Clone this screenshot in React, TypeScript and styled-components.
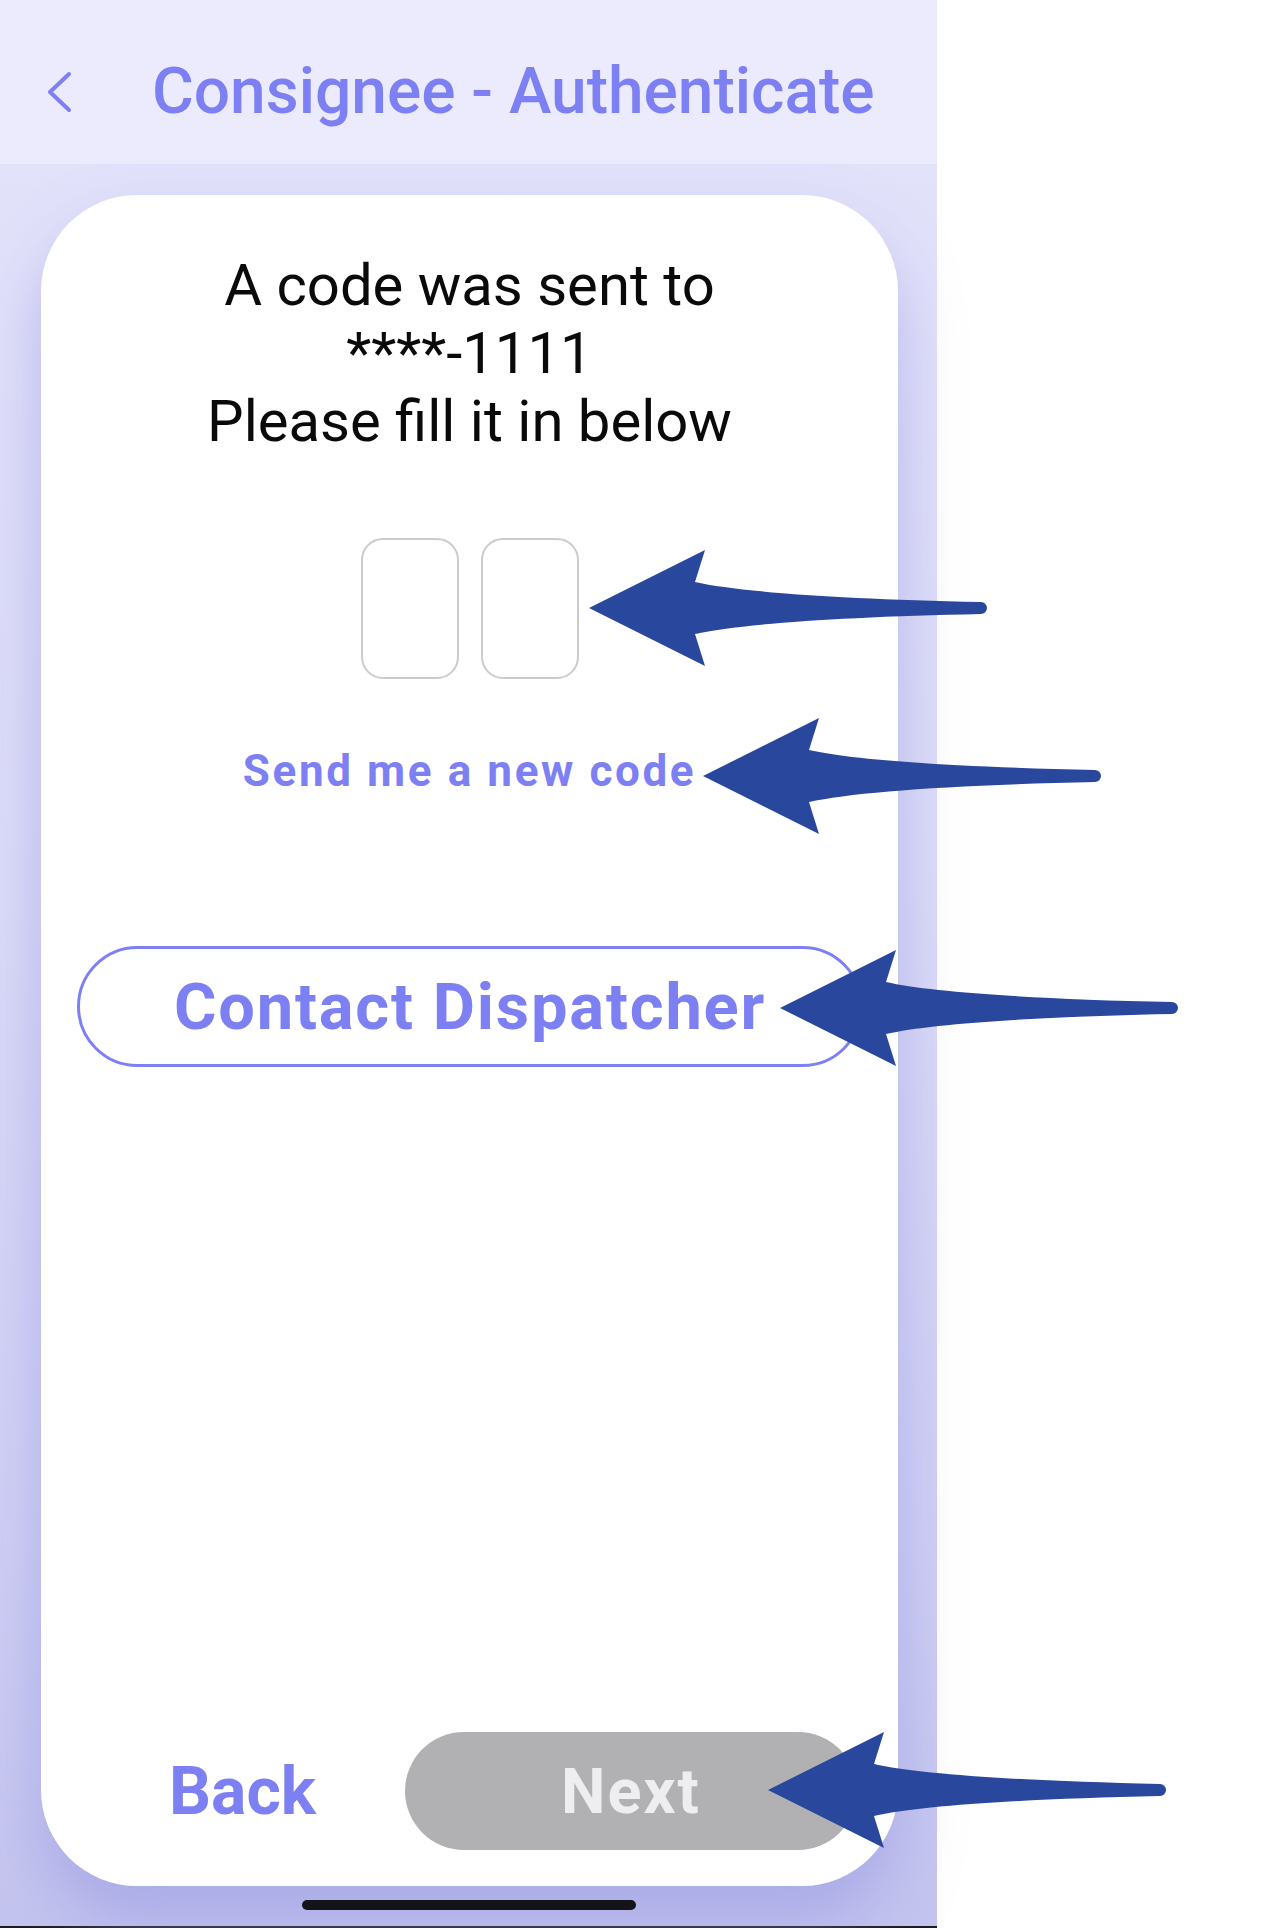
import React from 'react';
import styled, { createGlobalStyle } from 'styled-components';

const GlobalStyle = createGlobalStyle`
    html, body {
        margin: 0;
        padding: 0;
        background: #ffffff;
    }
    body {
        font-family: Roboto, "Liberation Sans", Arial, sans-serif;
    }
    * {
        box-sizing: border-box;
    }
`;

const Page = styled.div`
    position: relative;
    width: 1280px;
    height: 1928px;
    display: flex;
    background: #ffffff;
    overflow: hidden;
`;

const Phone = styled.div`
    width: 937px;
    height: 1928px;
    display: flex;
    flex-direction: column;
    background: linear-gradient(180deg, #e4e3fb 0%, #dcdcf8 45%, #cfcff4 80%, #c4c4ef 100%);
    border-bottom: 2px solid #1c1c24;
`;

const Header = styled.header`
    height: 164px;
    flex-shrink: 0;
    display: flex;
    align-items: center;
    padding: 20px 0 0 47px;
    background: #ecebfd;
`;

const Chevron = styled.svg`
    width: 26px;
    height: 42px;
    flex-shrink: 0;
`;

const Title = styled.h1`
    margin: 0 0 0 79px;
    font-size: 64px;
    line-height: 1;
    font-weight: 500;
    color: #7d80f2;
    white-space: nowrap;
`;

const Card = styled.main`
    flex-shrink: 0;
    height: 1691px;
    margin: 31px 39px 0 41px;
    padding-top: 56px;
    display: flex;
    flex-direction: column;
    align-items: center;
    background: #ffffff;
    border-radius: 96px;
    box-shadow: 0 36px 60px rgba(150, 150, 225, 0.55);
`;

const Message = styled.p`
    margin: 0;
    font-size: 58px;
    line-height: 68px;
    font-weight: 400;
    color: #0a0a0a;
    text-align: center;
`;

const CodeRow = styled.div`
    display: flex;
    gap: 22px;
    margin-top: 83px;
`;

const CodeBox = styled.div`
    width: 98px;
    height: 141px;
    border: 2px solid #cbcbcb;
    border-radius: 22px;
    background: #ffffff;
`;

const ResendLink = styled.a`
    margin-top: 66px;
    font-size: 44px;
    line-height: 52px;
    font-weight: 700;
    letter-spacing: 2.6px;
    color: #7d80f2;
    text-decoration: none;
`;

const OutlineButton = styled.button`
    align-self: stretch;
    margin: 149px 35px 0 36px;
    height: 121px;
    border: 3px solid #7d80f2;
    border-radius: 61px;
    background: transparent;
    font-family: inherit;
    font-size: 65px;
    font-weight: 700;
    letter-spacing: 1.8px;
    color: #7d80f2;
    padding: 0;
`;

const Footer = styled.div`
    margin-top: auto;
    align-self: stretch;
    display: flex;
    align-items: center;
    justify-content: space-between;
    padding: 0 41px 36px 128px;
`;

const TextButton = styled.button`
    border: none;
    background: none;
    padding: 0;
    font-family: inherit;
    font-size: 66px;
    font-weight: 700;
    color: #7d80f2;
`;

const PillButton = styled.button<{ $disabled?: boolean }>`
    width: 452px;
    height: 118px;
    border: none;
    border-radius: 59px;
    background: ${p => (p.$disabled ? '#b1b0b3' : '#7d80f2')};
    font-family: inherit;
    font-size: 63px;
    font-weight: 700;
    letter-spacing: 2px;
    color: #eeedf0;
    padding: 0;
`;

const HomeBar = styled.div`
    align-self: center;
    width: 334px;
    height: 10px;
    margin-top: 14px;
    border-radius: 5px;
    background: #141418;
`;

const ArrowSvg = styled.svg<{ $x: number; $y: number }>`
    position: absolute;
    left: ${p => p.$x}px;
    top: ${p => p.$y - 60}px;
    width: 400px;
    height: 120px;
    pointer-events: none;
`;

function Arrow({ x, y }: { x: number; y: number }) {
    return (
        <ArrowSvg $x={x} $y={y} viewBox="0 0 400 120">
            <path
                d="M0 60 L116 2 L106 34 C150 44 250 51 392 54 A6 6 0 0 1 392 66 C250 69 150 76 106 86 L116 118 Z"
                fill="#29479d"
            />
        </ArrowSvg>
    );
}

const arrows = [
    { x: 589, y: 608 },
    { x: 703, y: 776 },
    { x: 780, y: 1008 },
    { x: 768, y: 1790 },
];

export default function App() {
    return (
        <>
            <GlobalStyle />
            <Page>
                <Phone>
                    <Header>
                        <Chevron viewBox="0 0 26 42">
                            <polyline
                                points="22,3 3,21 22,39"
                                fill="none"
                                stroke="#7d80f2"
                                strokeWidth="4"
                                strokeLinecap="round"
                                strokeLinejoin="round"
                            />
                        </Chevron>
                        <Title>Consignee - Authenticate</Title>
                    </Header>
                    <Card>
                        <Message>
                            A code was sent to
                            <br />
                            ****-1111
                            <br />
                            Please fill it in below
                        </Message>
                        <CodeRow>
                            <CodeBox />
                            <CodeBox />
                        </CodeRow>
                        <ResendLink href="#">Send me a new code</ResendLink>
                        <OutlineButton>Contact Dispatcher</OutlineButton>
                        <Footer>
                            <TextButton>Back</TextButton>
                            <PillButton $disabled>Next</PillButton>
                        </Footer>
                    </Card>
                    <HomeBar />
                </Phone>
                {arrows.map((a, i) => (
                    <Arrow key={i} x={a.x} y={a.y} />
                ))}
            </Page>
        </>
    );
}
